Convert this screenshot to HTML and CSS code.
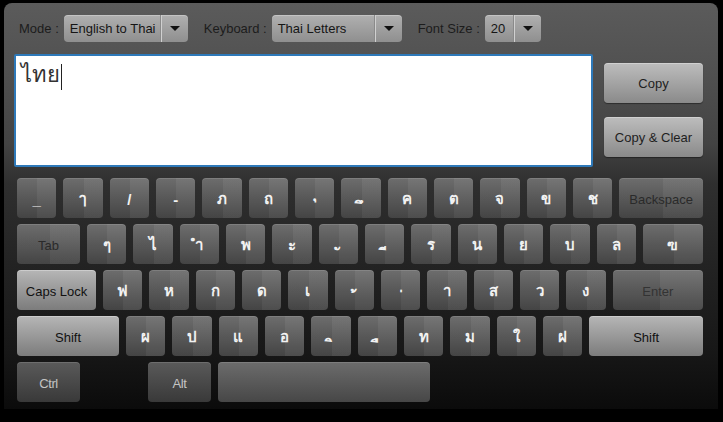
FILE: index.html
```html
<!DOCTYPE html>
<html>
<head>
<meta charset="utf-8">
<title>Thai Keyboard</title>
<link rel="stylesheet" href="styles.css">
</head>
<body>
<div class="panel">
  <div class="toolbar">
    <span class="label">Mode :</span>
    <div class="select sel-mode"><span class="sel-text">English to Thai</span><span class="sel-arrow"></span></div>
    <span class="label">Keyboard :</span>
    <div class="select sel-kb"><span class="sel-text">Thai Letters</span><span class="sel-arrow"></span></div>
    <span class="label">Font Size :</span>
    <div class="select sel-size"><span class="sel-text">20</span><span class="sel-arrow"></span></div>
  </div>

  <div class="main">
    <div class="editor"><span class="typed">ไทย</span><span class="caret"></span></div>
    <div class="actions">
      <div class="btn">Copy</div>
      <div class="btn">Copy &amp; Clear</div>
    </div>
  </div>

  <div class="keyboard">
    <div class="row">
      <div class="key">_</div>
      <div class="key">ๅ</div>
      <div class="key">/</div>
      <div class="key">-</div>
      <div class="key">ภ</div>
      <div class="key">ถ</div>
      <div class="key mark low">&nbsp;ุ</div>
      <div class="key mark">&nbsp;ึ</div>
      <div class="key">ค</div>
      <div class="key">ต</div>
      <div class="key">จ</div>
      <div class="key">ข</div>
      <div class="key">ช</div>
      <div class="key fn grow">Backspace</div>
    </div>
    <div class="row">
      <div class="key fn w-tab">Tab</div>
      <div class="key">ๆ</div>
      <div class="key">ไ</div>
      <div class="key">ำ</div>
      <div class="key">พ</div>
      <div class="key">ะ</div>
      <div class="key mark">&nbsp;ั</div>
      <div class="key mark">&nbsp;ี</div>
      <div class="key">ร</div>
      <div class="key">น</div>
      <div class="key">ย</div>
      <div class="key">บ</div>
      <div class="key">ล</div>
      <div class="key grow">ฃ</div>
    </div>
    <div class="row">
      <div class="key light w-caps">Caps Lock</div>
      <div class="key">ฟ</div>
      <div class="key">ห</div>
      <div class="key">ก</div>
      <div class="key">ด</div>
      <div class="key">เ</div>
      <div class="key mark">&nbsp;้</div>
      <div class="key mark">&nbsp;่</div>
      <div class="key">า</div>
      <div class="key">ส</div>
      <div class="key">ว</div>
      <div class="key">ง</div>
      <div class="key fn enter grow">Enter</div>
    </div>
    <div class="row">
      <div class="key light w-shift">Shift</div>
      <div class="key">ผ</div>
      <div class="key">ป</div>
      <div class="key">แ</div>
      <div class="key">อ</div>
      <div class="key mark">&nbsp;ิ</div>
      <div class="key mark">&nbsp;ื</div>
      <div class="key">ท</div>
      <div class="key">ม</div>
      <div class="key">ใ</div>
      <div class="key">ฝ</div>
      <div class="key light grow">Shift</div>
    </div>
    <div class="row">
      <div class="key mod w-tab">Ctrl</div>
      <div class="key mod w-alt">Alt</div>
      <div class="key space"></div>
    </div>
  </div>
</div>
</body>
</html>
```

FILE: styles.css
```css
* { box-sizing: border-box; }

html, body {
  margin: 0;
  padding: 0;
  background: #000;
  width: 723px;
  height: 422px;
  overflow: hidden;
  font-family: "Liberation Sans", Arial, sans-serif;
}

.panel {
  margin: 3px 5px 0 4px;
  width: 714px;
  height: 406px;
  border-radius: 8px 8px 0 0;
  background: linear-gradient(to bottom,
    #5b5b5b 0px,
    #525252 60px,
    #434343 140px,
    #2f2f2f 180px,
    #232323 260px,
    #171717 350px,
    #0b0b0b 406px);
  padding-top: 12px;
}

/* toolbar */
.toolbar {
  display: flex;
  align-items: center;
  height: 27px;
  padding-left: 15px;
}

.label {
  font-size: 13px;
  color: #1c1c1c;
  margin-right: 5px;
}

.select {
  display: flex;
  height: 27px;
  border-radius: 4px;
  background: linear-gradient(to bottom, #b0b0b0, #8f8f8f);
  box-shadow: inset 0 1px 0 rgba(255,255,255,0.25);
  margin-right: 16px;
}

.sel-text {
  flex: 1;
  font-size: 13px;
  color: #151515;
  line-height: 27px;
  padding-left: 6px;
  white-space: nowrap;
  overflow: hidden;
}

.sel-arrow {
  position: relative;
  width: 27px;
  border-left: 1px solid #d0d0d0;
  box-shadow: -1px 0 0 #8a8a8a;
}

.sel-arrow::after {
  content: "";
  position: absolute;
  left: 8px;
  top: 11px;
  border-left: 5px solid transparent;
  border-right: 5px solid transparent;
  border-top: 5px solid #111;
}

.sel-mode { width: 124px; }
.sel-kb { width: 130px; }
.sel-size { width: 56px; }

/* main area */
.main {
  display: flex;
  margin-top: 12px;
  padding-left: 10px;
}

.editor {
  width: 579px;
  height: 113px;
  background: #fff;
  border: 2px solid #2e79b9;
  border-radius: 2px;
  padding: 4px 5px;
  display: flex;
  align-items: flex-start;
}

.typed {
  font-size: 22px;
  line-height: 30px;
  color: #333;
}

.caret {
  display: inline-block;
  width: 1px;
  height: 26px;
  margin-top: 4px;
  margin-left: 1px;
  background: #222;
}

.actions {
  display: flex;
  flex-direction: column;
  gap: 14px;
  margin-left: 11px;
  margin-top: 9px;
}

.btn {
  width: 99px;
  height: 40px;
  border-radius: 4px;
  background: linear-gradient(to bottom, #bdbdbd, #8a8a8a);
  box-shadow: inset 0 1px 0 rgba(255,255,255,0.3), 0 1px 1px rgba(0,0,0,0.4);
  font-size: 13px;
  color: #1e1e1e;
  display: flex;
  align-items: center;
  justify-content: center;
}

/* keyboard */
.keyboard {
  margin-top: 11px;
  padding-left: 13px;
  padding-right: 15px;
  display: flex;
  flex-direction: column;
  gap: 6px;
}

.row {
  display: flex;
  gap: 7px;
  height: 40px;
}

.key {
  width: 39.33px;
  height: 40px;
  flex: none;
  border-radius: 4px;
  background:
    linear-gradient(to right, rgba(0,0,0,0.04) 0 52%, rgba(255,255,255,0.03) 52% 100%),
    linear-gradient(to bottom, #717171, #474747);
  box-shadow: inset 0 1px 0 rgba(255,255,255,0.12);
  color: #f2f2f2;
  font-size: 15px;
  font-weight: bold;
  display: flex;
  align-items: center;
  justify-content: center;
  padding-top: 2px;
}

.key.mark {
  align-items: flex-end;
  line-height: 20px;
  padding-bottom: 0;
  white-space: pre;
}

.key.mark.low {
  align-items: center;
  padding-bottom: 12px;
}

.key.grow { flex: 1; width: auto; }

.key.fn {
  font-size: 13px;
  font-weight: normal;
  color: #2a2a2a;
}

.key.enter { color: #333; }

.key.light {
  background: linear-gradient(to bottom, #b6b6b6, #7c7c7c);
  box-shadow: inset 0 1px 0 rgba(255,255,255,0.3);
  font-size: 13px;
  font-weight: normal;
  color: #111;
}

.key.mod {
  background: linear-gradient(to bottom, #5a5a5a, #393939);
  font-size: 13px;
  font-weight: normal;
  color: #c4c4c4;
  letter-spacing: -0.4px;
}

.w-tab { width: 63px; }
.w-caps { width: 79px; }
.w-shift { width: 102px; }
.w-alt { width: 63px; margin-left: 61px; }

.key.space {
  width: 212px;
  background: linear-gradient(to bottom, #6c6c6c, #474747);
}
```
